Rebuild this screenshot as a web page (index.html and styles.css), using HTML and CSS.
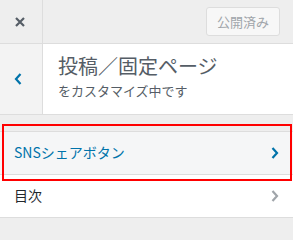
FILE: index.html
```html
<!DOCTYPE html>
<html lang="ja">
<head>
  <meta charset="UTF-8" />
  <title>カスタマイズ</title>
  <link rel="stylesheet" href="styles.css">
</head>
<body>
  <header class="topbar">
    <div class="close">
      <svg width="10" height="10" viewBox="0 0 10 10"><path d="M1 1L9 9M9 1L1 9" stroke="#555d66" stroke-width="2.2" fill="none"/></svg>
    </div>
    <button class="publish">公開済み</button>
  </header>

  <div class="panel-title">
    <div class="back">
      <svg width="8" height="12" viewBox="0 0 8 12"><path d="M6.5 1L2 6l4.5 5" stroke="#0073aa" stroke-width="2.2" fill="none"/></svg>
    </div>
    <div class="title-text">
      <h2>投稿／固定ページ</h2>
      <p>をカスタマイズ中です</p>
    </div>
  </div>

  <ul class="sections">
    <li class="item active">
      <span>SNSシェアボタン</span>
      <svg width="8" height="12" viewBox="0 0 8 12"><path d="M1.5 1L6 6l-4.5 5" stroke="#0073aa" stroke-width="2.2" fill="none"/></svg>
    </li>
    <li class="item">
      <span>目次</span>
      <svg width="8" height="12" viewBox="0 0 8 12"><path d="M1.5 1L6 6l-4.5 5" stroke="#a0a5aa" stroke-width="2.2" fill="none"/></svg>
    </li>
  </ul>

  <!-- highlight box -->
  <div class="highlight"></div>
</body>
</html>
```

FILE: styles.css
```css
body {
  margin: 0;
  background: #eee;
  font-family: "Noto Sans CJK JP", "Noto Sans", sans-serif;
  color: #555d66;
  position: relative;
}
.topbar {
  display: flex;
  align-items: center;
  height: 43px;
  border-bottom: 1px solid #ddd;
}
.close {
  width: 43px;
  height: 43px;
  border-right: 1px solid #ddd;
  display: flex;
  align-items: center;
  justify-content: center;
  box-sizing: border-box;
  padding-right: 3px;
}
.publish {
  margin-left: auto;
  margin-right: 13px;
  width: 74px;
  height: 29px;
  background: #f7f7f7;
  border: 1px solid #ddd;
  border-radius: 3px;
  color: #a0a5aa;
  font-family: inherit;
  font-size: 13px;
  padding: 0;
}
.panel-title {
  display: flex;
  height: 70px;
  background: #fff;
  border-bottom: 1px solid #ddd;
}
.back {
  width: 43px;
  background: #f3f3f3;
  border-right: 1px solid #ddd;
  display: flex;
  align-items: center;
  justify-content: center;
  box-sizing: border-box;
  padding: 0 6px 0 0;
}
.title-text {
  padding: 8px 0 0 15px;
}
.title-text h2 {
  margin: 0;
  font-size: 20px;
  font-weight: normal;
  line-height: 28px;
}
.title-text p {
  margin: 2px 0 0;
  font-size: 13px;
  line-height: 18px;
}
.sections {
  list-style: none;
  margin: 16px 0 0;
  padding: 0;
}
.item {
  display: flex;
  align-items: center;
  justify-content: space-between;
  height: 43px;
  padding: 0 14px 3px 14px;
  box-sizing: border-box;
  background: #fff;
  border-top: 1px solid #ddd;
  font-size: 14px;
  color: #23282d;
}
.item svg {
  margin-top: 3px;
}
.item:last-child {
  height: 44px;
  border-bottom: 1px solid #ddd;
}
.item.active {
  background: #f5f6f7;
  color: #0073aa;
}
.highlight {
  position: absolute;
  left: 2px;
  top: 124px;
  width: 290px;
  height: 57px;
  border: 2px solid #f00;
  box-sizing: border-box;
}
```
